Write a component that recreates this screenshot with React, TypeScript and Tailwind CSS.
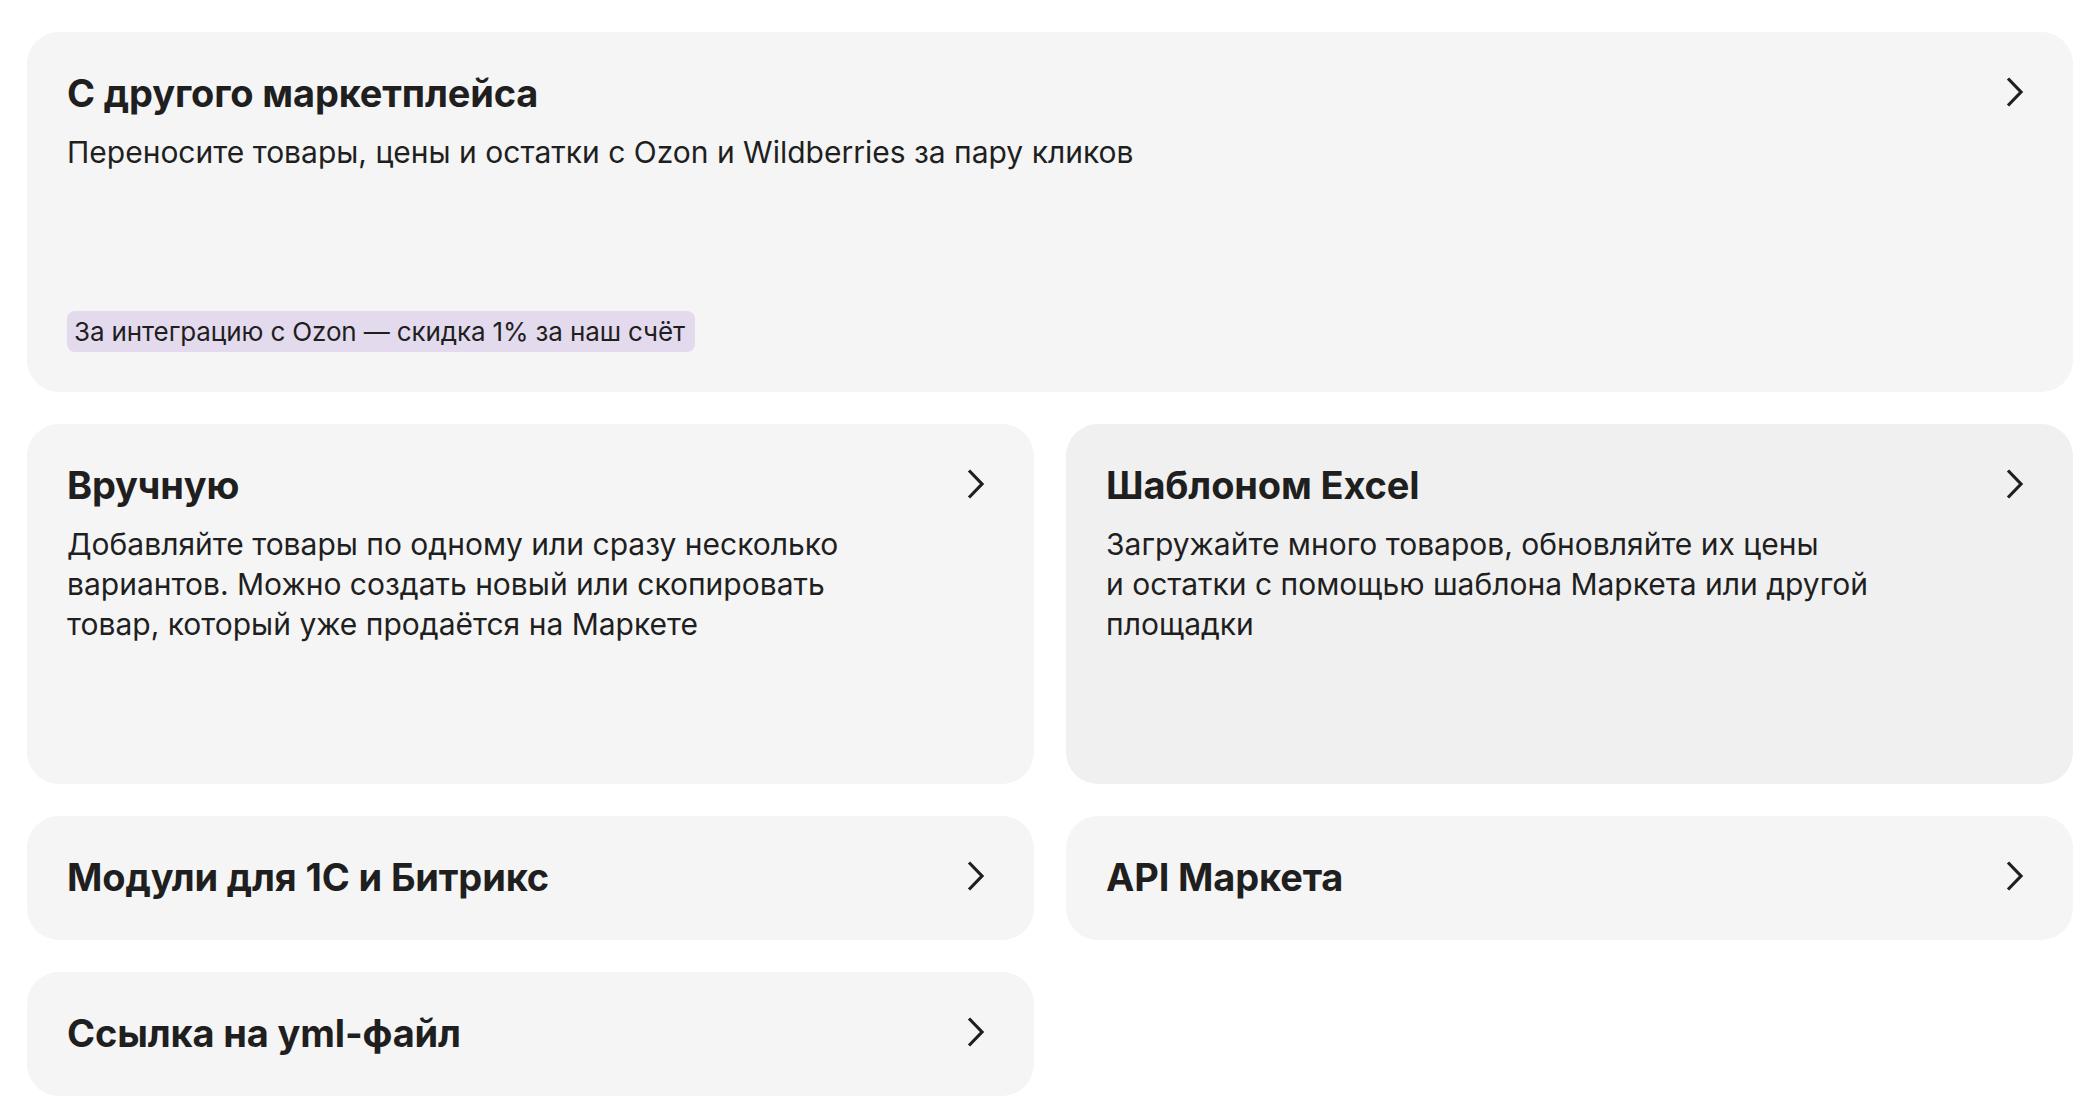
import React from 'react';

type Card = {
  title: string;
  lines?: string[];
  badge?: string;
  wide?: boolean;
  tall?: boolean;
  muted?: boolean;
};

const cards: Card[] = [
  {
    title: 'С другого маркетплейса',
    lines: ['Переносите товары, цены и остатки с Ozon и Wildberries за пару кликов'],
    badge: 'За интеграцию с Ozon — скидка 1% за наш счёт',
    wide: true,
    tall: true,
  },
  {
    title: 'Вручную',
    lines: [
      'Добавляйте товары по одному или сразу несколько',
      'вариантов. Можно создать новый или скопировать',
      'товар, который уже продаётся на Маркете',
    ],
    tall: true,
  },
  {
    title: 'Шаблоном Excel',
    lines: [
      'Загружайте много товаров, обновляйте их цены',
      'и остатки с помощью шаблона Маркета или другой',
      'площадки',
    ],
    tall: true,
    muted: true,
  },
  { title: 'Модули для 1С и Битрикс' },
  { title: 'API Маркета' },
  { title: 'Ссылка на yml-файл' },
];

function Chevron() {
  return (
    <svg width="28" height="44" viewBox="0 0 28 44" fill="none" className="shrink-0">
      <path d="M3 6.5 L16 20 L3 33.5" stroke="#1f1f1f" strokeWidth="3.2" strokeLinecap="butt" strokeLinejoin="miter" />
    </svg>
  );
}

function OptionCard({ card }: { card: Card }) {
  return (
    <div
      className={`flex flex-col rounded-[32px] p-10 cursor-pointer ${card.wide ? 'col-span-2' : ''} ${
        card.tall ? 'h-[360px]' : 'h-[124px]'
      } ${card.muted ? 'bg-[#f0f0f0]' : 'bg-[#f5f5f5]'}`}
    >
      <div className="flex items-start justify-between gap-6">
        <h3 className="-mt-px text-[38px] leading-[44px] font-bold tracking-[-0.004em] text-[#1f1f1f]">{card.title}</h3>
        <Chevron />
      </div>
      {card.lines && (
        <p className="mt-4 text-[30px] leading-[40px] text-[#1f1f1f]">
          {card.lines.map((l, i) => (
            <React.Fragment key={i}>
              {i > 0 && <br />}
              {l}
            </React.Fragment>
          ))}
        </p>
      )}
      {card.badge && (
        <div className="mt-auto">
          <span className="inline-block rounded-lg bg-[#e4daee] pl-[7px] pr-[10px] text-[26px] leading-[41px] tracking-[-0.005em] text-[#1f1f1f]">
            {card.badge}
          </span>
        </div>
      )}
    </div>
  );
}

export default function App() {
  return (
    <div className="min-h-screen bg-white font-['Inter','Noto_Sans',sans-serif]">
      <div className="ml-[27px] w-[2046px] pt-8 pb-6">
        <div className="grid grid-cols-2 gap-8">
          {cards.map((c) => (
            <OptionCard key={c.title} card={c} />
          ))}
        </div>
      </div>
    </div>
  );
}
